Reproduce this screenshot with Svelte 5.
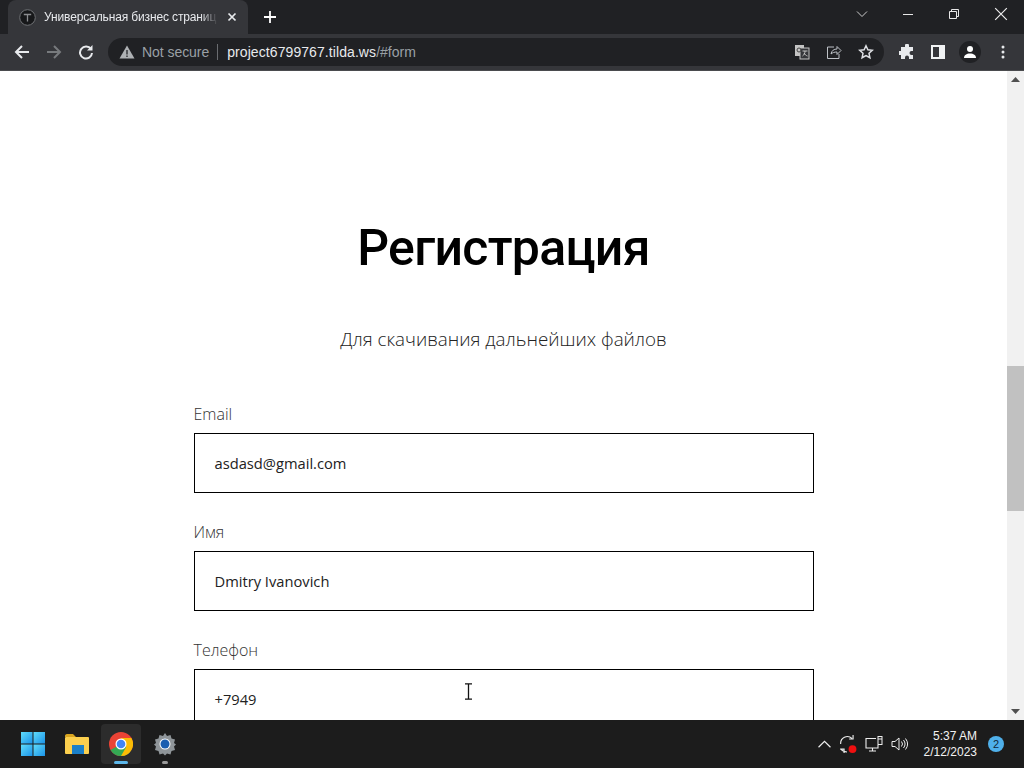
<script>
  const fields = [
    { label: 'Email', value: 'asdasd@gmail.com' },
    { label: 'Имя', value: 'Dmitry Ivanovich' },
    { label: 'Телефон', value: '+7949' }
  ];
</script>

<div class="screen">
  <header class="chrome">
    <div class="tabstrip">
      <div class="tab">
        <svg class="favicon" viewBox="0 0 17 17" width="17" height="17">
          <circle cx="8.500" cy="8.500" r="7.800" fill="#17181a" stroke="#6f7174" stroke-width="1"/>
          <path d="M4.800 5.500h7.400M8.500 5.500v7" stroke="#8a8c8f" stroke-width="1.300" fill="none"/>
        </svg>
        <span class="tabtitle">Универсальная бизнес страниц</span>
        <svg class="tabclose" viewBox="0 0 10 10" width="10" height="10"><path d="M1.500 1.500l7 7M8.500 1.500l-7 7" stroke="#e8eaed" stroke-width="1.700"/></svg>
      </div>
      <svg class="newtab" viewBox="0 0 12 12" width="12" height="12"><path d="M6 0v12M0 6h12" stroke="#fff" stroke-width="1.800"/></svg>
      <div class="spacer"></div>
      <svg class="chev" viewBox="0 0 12 12" width="12" height="12"><path d="M1 3.500l5 5 5-5" stroke="#ccc" fill="none" stroke-width="1"/></svg>
      <div class="winbtns">
        <svg viewBox="0 0 12 12" width="12" height="12"><path d="M1 6.500h10" stroke="#e8e8e8" stroke-width="1"/></svg>
        <svg viewBox="0 0 12 12" width="12" height="12"><path d="M1.500 3.500h7v7h-7zM3.500 3.500v-2h7v7h-2" stroke="#e8e8e8" fill="none" stroke-width="1"/></svg>
        <svg viewBox="0 0 12 12" width="14" height="14"><path d="M1 1l10 10M11 1L1 11" stroke="#eee" stroke-width="1"/></svg>
      </div>
    </div>
    <div class="toolbar">
      <svg class="nav" viewBox="0 0 16 16" width="16" height="16"><path d="M15 8H2M8 2L2 8l6 6" stroke="#e8eaed" stroke-width="2" fill="none"/></svg>
      <svg class="nav" viewBox="0 0 16 16" width="16" height="16"><path d="M1 8h13M8 2l6 6-6 6" stroke="#777a7d" stroke-width="2" fill="none"/></svg>
      <svg class="nav" viewBox="0 0 16 16" width="16" height="16"><path d="M13 5.200A6 6 0 1 0 14 9" stroke="#e8eaed" stroke-width="2" fill="none"/><path d="M14.500 1v5.500H9z" fill="#e8eaed"/></svg>
      <div class="omnibox">
        <svg viewBox="0 0 16 14" width="16" height="14"><path d="M8 0.500L15.500 13.500H0.500z" fill="#aeb1b4"/><path d="M8 5v4.500M8 10.500v1.500" stroke="#2e3033" stroke-width="1.400"/></svg>
        <span class="notsecure">Not secure</span>
        <span class="sep"></span>
        <span class="host">project6799767.tilda.ws</span><span class="path">/#form</span>
        <div class="spacer"></div>
        <svg class="omni-i" viewBox="0 0 16 16" width="16" height="16"><rect x="1" y="1" width="9" height="11" fill="#c4c4c4"/><rect x="6" y="4" width="9" height="11" fill="#35363a" stroke="#c4c4c4"/><path d="M8.500 7h5M11 7c0 2.500-1 4-2.500 5M10 9c.6 1.300 2 2.500 3.500 3" stroke="#c4c4c4" fill="none"/><circle cx="5" cy="6" r="2" fill="none" stroke="#444"/></svg>
        <svg class="omni-i" viewBox="0 0 16 16" width="16" height="16"><path d="M8 3H1.500v11.500H13V10" stroke="#bdc1c6" fill="none"/><path d="M5 10c.6-3.500 3-5 6-5V2.500l4 4-4 4V8c-2.500 0-4.500.6-6 2z" stroke="#bdc1c6" fill="none"/></svg>
        <svg class="omni-i" viewBox="0 0 16 16" width="16" height="16"><path d="M8 1.800l1.900 4 4.400.5-3.300 3 .9 4.400L8 11.500l-3.900 2.200.9-4.400-3.300-3 4.400-.5z" stroke="#dfe1e5" stroke-width="1.500" fill="none"/></svg>
      </div>
      <svg class="tool first" viewBox="0 0 16 16" width="16" height="16"><path d="M6 1.500a2 2 0 0 1 4 0V3h4v4h-1.500a2 2 0 0 0 0 4H14v4h-4v-1.500a2 2 0 0 0-4 0V15H2v-4H.8a2 2 0 0 1 0-4H2V3h4z" fill="#e8eaed"/></svg>
      <svg class="tool panel" viewBox="0 0 14 14" width="14" height="14"><rect x="1" y="1" width="12" height="12" fill="none" stroke="#f1f3f4" stroke-width="2"/><rect x="8" y="1" width="5" height="12" fill="#f1f3f4"/></svg>
      <div class="avatar">
        <svg viewBox="0 0 14 14" width="14" height="14"><circle cx="7" cy="4" r="3" fill="#fff"/><path d="M1 13c0-3 2.500-4.500 6-4.500s6 1.500 6 4.500z" fill="#fff"/></svg>
      </div>
      <svg class="tool dots" viewBox="0 0 4 14" width="4" height="14"><circle cx="2" cy="2" r="1.500" fill="#e8eaed"/><circle cx="2" cy="7" r="1.500" fill="#e8eaed"/><circle cx="2" cy="12" r="1.500" fill="#e8eaed"/></svg>
    </div>
  </header>

  <div class="viewport">
    <main class="page">
      <h1>Регистрация</h1>
      <p class="sub">Для скачивания дальнейших файлов</p>
      <form>
        {#each fields as f}
          <div class="field">
            <div class="label">{f.label}</div>
            <div class="input">{f.value}</div>
          </div>
        {/each}
      </form>
      <svg class="ibeam" viewBox="0 0 9 17" width="9" height="17"><path d="M1 .8h7M1 16.200h7M4.500 1v15" stroke="#111" stroke-width="1.300" fill="none"/></svg>
    </main>
    <aside class="scrollbar">
      <svg viewBox="0 0 9 5" width="9" height="5"><path d="M4.500 0L9 5H0z" fill="#505050"/></svg>
      <div class="track"><div class="thumb"></div></div>
      <svg viewBox="0 0 9 5" width="9" height="5"><path d="M0 0h9L4.500 5z" fill="#505050"/></svg>
    </aside>
  </div>

  <footer class="taskbar">
    <div class="apps">
      <div class="app">
        <svg viewBox="0 0 24 24" width="24" height="24">
          <defs>
            <linearGradient id="win" x1="0" y1="0" x2="1" y2="1"><stop offset="0" stop-color="#5fdcfb"/><stop offset="1" stop-color="#1b93e8"/></linearGradient>
          </defs>
          <rect x="0" y="0" width="11.500" height="11.500" fill="url(#win)"/><rect x="12.500" y="0" width="11.500" height="11.500" fill="url(#win)"/>
          <rect x="0" y="12.500" width="11.500" height="11.500" fill="url(#win)"/><rect x="12.500" y="12.500" width="11.500" height="11.500" fill="url(#win)"/>
        </svg>
      </div>
      <div class="app">
        <svg viewBox="0 0 26 22" width="26" height="22">
          <path d="M1 2.500a2 2 0 0 1 2-1.500h6l3 3h-11z" fill="#d9a520"/><rect x="1" y="4" width="24" height="17" rx="1" fill="#fbcf4e"/><rect x="8" y="12" width="12" height="9" fill="#1a7fc8"/>
        </svg>
      </div>
      <div class="app active">
        <svg viewBox="0 0 24 24" width="24" height="24">
          <circle cx="12" cy="12" r="12" fill="#ea4335"/>
          <path d="M12 12L1.600 18A12 12 0 0 0 12 24a12 12 0 0 0 10.400-6z" fill="#34a853"/>
          <path d="M12 6h10.400A12 12 0 0 1 12 24l5.200-9z" fill="#fbbc05"/>
          <circle cx="12" cy="12" r="5.500" fill="#fff"/><circle cx="12" cy="12" r="4.300" fill="#4285f4"/>
        </svg>
        <span class="runbar"></span>
      </div>
      <div class="app">
        <svg viewBox="0 0 24 24" width="24" height="24">
          <path d="M12 1l2 3 3.500-1 1 3.500 3.500 1-1 3.500 2 1.500-2 2 1 3.500-3.500 1-1 3.500-3.500-1-2 2-2-2-3.500 1-1-3.500-3.500-1 1-3.500-2-2 2-1.500-1-3.500 3.500-1 1-3.500 3.500 1z" fill="#8f9599"/>
          <circle cx="12" cy="12" r="5.500" fill="#fff"/><circle cx="12" cy="12" r="4.500" fill="#1c5fb0"/>
        </svg>
        <span class="runbar dim"></span>
      </div>
    </div>
    <div class="spacer"></div>
    <div class="tray">
      <svg viewBox="0 0 12 7" width="13" height="8"><path d="M.5 6.500L6 1l5.500 5.500" stroke="#eee" fill="none" stroke-width="1.100"/></svg>
      <svg viewBox="0 0 16 16" width="18" height="18"><path d="M1.500 8a6 6 0 0 1 10-5M12.500 0v3.500H9M1 12.500h3.500V16M2 13a6 6 0 0 0 5 2" stroke="#eee" fill="none" stroke-width="1"/><circle cx="12" cy="12.500" r="3.500" fill="#f01010"/></svg>
      <svg viewBox="0 0 18 16" width="18" height="16"><path d="M11 2.500H1V12h12V9M4 15h7M7.500 12v3" stroke="#eee" fill="none" stroke-width="1.100"/><rect x="13" y="0.500" width="4" height="8" fill="none" stroke="#eee"/><path d="M13 3h4" stroke="#eee"/></svg>
      <svg viewBox="0 0 17 14" width="17" height="14"><path d="M1 4.500h3L8 1v12L4 9.500H1zM10.500 4.500a4 4 0 0 1 0 5M12.500 3a6.500 6.500 0 0 1 0 8M14.500 1.500a9 9 0 0 1 0 11" stroke="#eee" fill="none"/></svg>
    </div>
    <div class="clock"><div>5:37 AM</div><div>2/12/2023</div></div>
    <div class="badge">2</div>
  </footer>
</div>

<style>
  :global(body) { margin: 0; }
  .screen {
    width: 1024px; height: 768px; overflow: hidden;
    display: flex; flex-direction: column;
    background: #fff; font-family: "Noto Sans", "Liberation Sans", sans-serif;
  }
  .spacer { flex: 1; }

  .chrome { height: 71px; flex: none; background: #202124; display: flex; flex-direction: column; }
  .tabstrip { height: 34px; flex: none; display: flex; align-items: center; padding-left: 8px; padding-bottom: 6px; box-sizing: border-box; }
  .tab {
    width: 240px; height: 34px; margin-bottom: -6px; box-sizing: border-box;
    background: #35363a; border-radius: 8px 8px 0 0;
    display: flex; align-items: center; padding: 0 0 0 11px; gap: 8px;
  }
  .tabtitle {
    font: 12px/16px "Liberation Sans", "Noto Sans", sans-serif; color: #e8eaed;
    width: 174px; white-space: nowrap; letter-spacing: -0.13px;
    -webkit-mask-image: linear-gradient(to right, #000 90%, transparent);
    mask-image: linear-gradient(to right, #000 90%, transparent);
  }
  .tabclose { margin-left: 1px; }
  .newtab { margin-left: 16px; margin-top: 6px; }
  .chev { margin-right: 34px; }
  .winbtns { display: flex; align-items: center; gap: 34px; padding-right: 16px; }
  .toolbar {
    height: 37px; flex: none; box-sizing: border-box; background: #35363a; border-bottom: 1px solid #4a4b4e;
    display: flex; align-items: center; padding: 0 0 0 14px;
  }
  .nav { margin-right: 16px; }
  .omnibox {
    width: 776px; height: 28px; margin-left: -2px; box-sizing: border-box; background: #202124; border-radius: 14px;
    display: flex; align-items: center; padding: 0 10px 0 11px;
    font: 14px/18px "Liberation Sans", "Noto Sans", sans-serif;
  }
  .notsecure { color: #9aa0a6; margin-left: 7px; letter-spacing: -0.05px; }
  .sep { width: 1px; height: 16px; background: #6a6c70; margin: 0 9px 0 8px; }
  .host { color: #e8eaed; letter-spacing: 0.08px; }
  .path { color: #9aa0a6; }
  .omni-i { margin-left: 16px; }
  .tool { margin-left: 15px; }
  .tool.first { margin-left: 15px; }
  .tool.panel { margin-left: 16px; }
  .avatar {
    width: 22px; height: 22px; border-radius: 50%; background: #202124; margin-left: 14px;
    display: flex; align-items: center; justify-content: center;
  }
  .dots { margin-left: 20px; }

  .viewport { flex: 1; min-height: 0; display: flex; }
  .page {
    flex: 1; min-width: 0; overflow: hidden; position: relative; color: #000;
    font-family: "Open Sans", "Noto Sans", sans-serif;
    padding-top: 139px; box-sizing: border-box;
  }
  h1 { margin: 0; text-align: center; font-size: 50px; line-height: 76px; font-weight: 500; font-family: "Roboto", "Noto Sans", sans-serif; letter-spacing: -0.7px; }
  .sub { margin: 38px 0 0; text-align: center; font-size: 18.800px; line-height: 30px; font-weight: 300; color: #222; }
  form { width: 620px; margin: 50px auto 0; }
  .field { margin-bottom: 29px; }
  .label { font-size: 16px; line-height: 20px; font-weight: 300; color: #333; height: 20px; margin-bottom: 9px; }
  .input {
    height: 60px; box-sizing: border-box; border: 1px solid #000; padding: 0 20px;
    display: flex; align-items: center; font-size: 14.700px; color: #222; font-weight: 400;
  }
  .ibeam { position: absolute; left: 464px; top: 612px; }

  .scrollbar {
    width: 17px; flex: none; background: #f1f1f1; display: flex; flex-direction: column; align-items: center;
    padding: 6px 0; box-sizing: border-box; gap: 6px;
  }
  .track { flex: 1; width: 100%; margin: 0; }
  .thumb { height: 145px; background: #c1c1c1; margin-top: 278px; }

  .taskbar {
    height: 48px; flex: none; background: #1c1c1c; display: flex; align-items: center;
    color: #f2f2f2; font: 12px/18px "Liberation Sans", "Noto Sans", sans-serif;
  }
  .apps { display: flex; padding-left: 13px; gap: 4px; }
  .app { width: 40px; height: 40px; border-radius: 4px; position: relative; display: flex; align-items: center; justify-content: center; }
  .app.active { background: #2c2c2c; }
  .runbar { position: absolute; bottom: 0; left: 13px; width: 14px; height: 3px; border-radius: 2px; background: #5cb7ea; }
  .runbar.dim { left: 17px; width: 6px; background: #999; }
  .tray { display: flex; align-items: center; gap: 8px; }
  .clock { text-align: right; margin-left: 9px; width: 60px; line-height: 16px; }
  .badge {
    width: 16px; height: 16px; border-radius: 50%; background: #4fb0ea; color: #10283a;
    font-size: 11px; line-height: 16px; text-align: center; margin: 0 20px 0 11px;
  }
</style>
